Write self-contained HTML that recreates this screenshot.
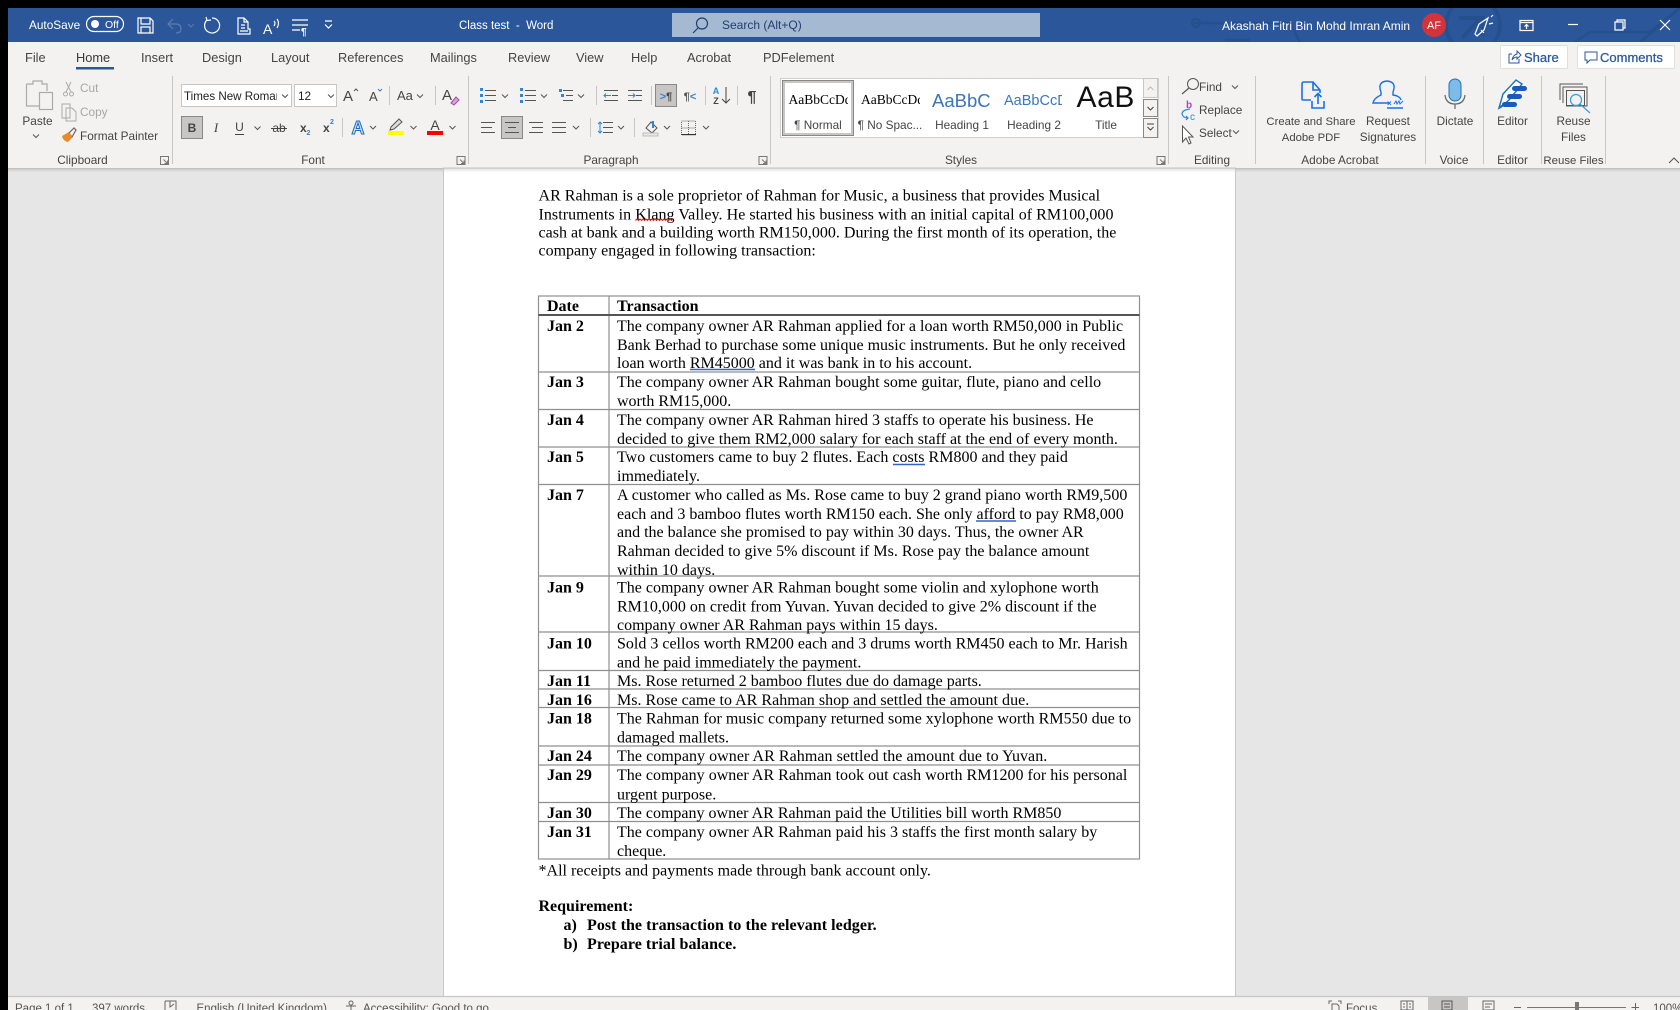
<!DOCTYPE html>
<html><head><meta charset="utf-8"><title>Class test - Word</title>
<style>
html,body{margin:0;padding:0;background:#000;width:1680px;height:1010px;overflow:hidden}
svg{display:block;position:absolute;left:0;top:0}
text{white-space:pre}
.d{font:16px "Liberation Serif",serif;fill:#000}
.b{font:bold 16px "Liberation Serif",serif;fill:#000}
.r{font:11.8px "Liberation Sans",sans-serif;fill:#444}
.c{font:11.8px "Liberation Sans",sans-serif;fill:#444;text-anchor:middle}
.t{font:12.8px "Liberation Sans",sans-serif;fill:#444}
.w{font:12px "Liberation Sans",sans-serif;fill:#fff}
.s{font:11.5px "Liberation Sans",sans-serif;fill:#555}
.i{fill:none;stroke:#555;stroke-width:1}
.k{fill:none;stroke:#666;stroke-width:1}
.wi{fill:none;stroke:#fff;stroke-width:1.2}
.sep{stroke:#c8c6c4;stroke-width:1}
</style></head><body>
<svg width="1680" height="1010" viewBox="0 0 1680 1010" xmlns="http://www.w3.org/2000/svg">
<defs>
<g id="chev"><path d="M-3 -1.5L0 1.5L3 -1.5" fill="none" stroke="#555" stroke-width="1"/></g>
<g id="lau"><path d="M-4 -4H4V4H-4Z M-1 -1L3 3M3 0V3H0" fill="none" stroke="#777" stroke-width="1"/></g>
<linearGradient id="sh" x1="0" y1="0" x2="0" y2="1"><stop offset="0" stop-color="#bbb"/><stop offset="1" stop-color="#e6e6e6" stop-opacity="0"/></linearGradient>
<clipPath id="clipN"><rect x="786" y="90" width="62" height="20"/></clipPath>
<clipPath id="clipS"><rect x="858" y="90" width="62" height="20"/></clipPath>
<clipPath id="clipH1"><rect x="930" y="85" width="60" height="30"/></clipPath>
<clipPath id="clipH2"><rect x="1003" y="85" width="59" height="30"/></clipPath>
<clipPath id="clipT"><rect x="1070" y="78" width="63" height="34"/></clipPath>
<clipPath id="clipF"><rect x="183" y="86" width="94" height="20"/></clipPath>
<clipPath id="clipB"><rect x="8" y="8" width="1672" height="34"/></clipPath>
</defs>

<!-- frame -->
<rect x="8" y="8" width="1672" height="1002" fill="#e6e6e6"/>
<rect x="8" y="8" width="1672" height="34" fill="#2b579a"/>
<g clip-path="url(#clipB)" fill="none" stroke="#264f8e" stroke-width="2.5">
<circle cx="1473" cy="25" r="27" stroke-width="4"/>
<path d="M1459 18H1483V36M1481 18L1462 38" stroke-width="4"/>
<path d="M1194 23H1290L1300 42"/><circle cx="1196" cy="23" r="4"/>
<path d="M1575 42L1590 32H1650L1680 8"/>
<path d="M1640 42L1660 26"/>
<path d="M1225 40H1250"/>
</g>

<!-- title bar -->
<text class="w" x="29" y="29" style="font-size:11.8px">AutoSave</text>
<rect x="86.500" y="16.500" width="37" height="15" rx="7.500" fill="none" stroke="#fff" stroke-width="1.200"/>
<circle cx="95" cy="24" r="4" fill="#fff"/>
<text x="105" y="28" style="font:10.5px 'Liberation Sans',sans-serif;fill:#fff">Off</text>
<path class="wi" d="M138 18H150L153 21V33H138ZM141 18V24H150V18M141 33V27H150V33"/>
<path d="M173 19L168 24L173 29M168 24H176Q181 24 181 29Q181 33 176 33" fill="none" stroke="#5b7db0" stroke-width="1.200"/>
<path d="M188 24L191 27L194 24" fill="none" stroke="#5b7db0" stroke-width="1"/>
<path class="wi" d="M212 18A7.500 7.500 0 1 1 207 20M206 17L207 20.500L211 20"/>
<path class="wi" d="M238 18H244L248 22V29H250V34H238V18ZM244 18V22H248M241 25H245M241 28H245M240 31H248"/>
<text x="263" y="34" style="font:14px 'Liberation Sans',sans-serif;fill:#fff">A</text>
<path class="wi" d="M274 21Q276 23 274 26M277 19Q280 23 277 28" stroke-width="1"/>
<path class="wi" d="M292 20H308M292 25H308M292 30H300"/>
<text x="301" y="35" style="font:bold 10px 'Liberation Sans',sans-serif;fill:#fff">¶</text>
<path class="wi" d="M325 21H332M325 24.500L328.500 28L332 24.500"/>
<text class="w" x="459" y="29" style="font-size:11.5px">Class test  -  Word</text>
<rect x="672" y="13" width="368" height="24" fill="#a6b9d2"/>
<circle cx="702" cy="23.500" r="5.500" fill="none" stroke="#1f3f70" stroke-width="1.200"/><path d="M698 28L693 33" fill="none" stroke="#1f3f70" stroke-width="1.200"/>
<text x="722" y="29" style="font:12px 'Liberation Sans',sans-serif;fill:#1f3f70">Search (Alt+Q)</text>
<text class="w" x="1222" y="30" font-size="12">Akashah Fitri Bin Mohd Imran Amin</text>
<circle cx="1434" cy="25" r="12" fill="#d1343b"/>
<text x="1434" y="29" text-anchor="middle" style="font:11px 'Liberation Sans',sans-serif;fill:#fff">AF</text>
<path class="wi" d="M1475 34L1479 24L1488 18L1484 30L1477 36ZM1481 30L1484 33M1491 17L1493 15M1489 24L1493 23"/>
<rect x="1520" y="20.500" width="13" height="10" fill="none" stroke="#fff" stroke-width="1.200"/><path class="wi" d="M1520 22.500H1533M1526.500 29V25M1524.500 26.500L1526.500 24.500L1528.500 26.500"/>
<path class="wi" d="M1568 24.500H1578"/>
<path class="wi" d="M1615 22H1623V30H1615ZM1617 22V20H1625V28H1623"/>
<path class="wi" d="M1660 20L1670 30M1670 20L1660 30"/>

<!-- ribbon -->
<rect x="8" y="42" width="1672" height="126" fill="#f3f2f1"/>
<rect x="8" y="168" width="1672" height="5" fill="url(#sh)"/>
<text class="t" x="25" y="62">File</text>
<text class="t" x="76" y="62" style="fill:#3b3a39">Home</text>
<rect x="76" y="67" width="38" height="2.500" fill="#2b579a"/>
<text class="t" x="141" y="62">Insert</text>
<text class="t" x="202" y="62">Design</text>
<text class="t" x="271" y="62">Layout</text>
<text class="t" x="338" y="62">References</text>
<text class="t" x="430" y="62">Mailings</text>
<text class="t" x="508" y="62">Review</text>
<text class="t" x="576" y="62">View</text>
<text class="t" x="631" y="62">Help</text>
<text class="t" x="687" y="62">Acrobat</text>
<text class="t" x="763" y="62">PDFelement</text>

<rect x="1500.500" y="45.500" width="67" height="23" rx="1" fill="#fff" stroke="#e1dfdd"/>
<path d="M1509 54H1512M1509 54V63H1519V59M1512 60Q1513 55 1517 54V51L1521 55L1517 59V57Q1514 57 1512 60" fill="none" stroke="#2b579a" stroke-width="1"/>
<text x="1524" y="62" style="font:13px 'Liberation Sans',sans-serif;fill:#2b579a;stroke:#2b579a;stroke-width:.25">Share</text>
<rect x="1577.500" y="45.500" width="97" height="23" rx="1" fill="#fff" stroke="#e1dfdd"/>
<path d="M1585 52H1597V60H1590L1587 63V60H1585Z" fill="none" stroke="#2b579a" stroke-width="1"/>
<text x="1600" y="62" style="font:13px 'Liberation Sans',sans-serif;fill:#2b579a;stroke:#2b579a;stroke-width:.25">Comments</text>

<!-- separators -->
<path class="sep" d="M172.500 76V164M468.500 76V164M770.500 76V164M1168.500 76V164M1255.500 76V164M1425.500 76V164M1483.500 76V164M1541.500 76V164M1605.500 76V164"/>
<path class="sep" d="M389.500 86V105M435.500 86V105M342.500 118V137M596.500 86V105M651.500 86V105M705.500 86V105M737.500 86V105M590.500 118V137M634.500 118V137"/>
<text class="c" x="82.500" y="164">Clipboard</text>
<text class="c" x="313" y="164">Font</text>
<text class="c" x="611" y="164">Paragraph</text>
<text class="c" x="961" y="164">Styles</text>
<text class="c" x="1212" y="164">Editing</text>
<text class="c" x="1340" y="164">Adobe Acrobat</text>
<text class="c" x="1454" y="164">Voice</text>
<text class="c" x="1512.500" y="164">Editor</text>
<text class="c" x="1573.500" y="164" style="font-size:11.4px">Reuse Files</text>
<use href="#lau" x="164.500" y="160.500"/><use href="#lau" x="461" y="160.500"/><use href="#lau" x="763" y="160.500"/><use href="#lau" x="1161" y="160.500"/>
<path d="M1669 163L1674 158L1679 163" fill="none" stroke="#555" stroke-width="1"/>

<!-- clipboard -->
<path d="M26.500 84H33V81H42V84H47V91M26.500 84V106H39" fill="none" stroke="#aaa" stroke-width="1.200"/>
<rect x="39.500" y="92.500" width="13" height="17" fill="#f3f2f1" stroke="#aaa" stroke-width="1.200"/>
<text class="c" x="37.500" y="125">Paste</text>
<use href="#chev" x="36" y="136"/>
<path d="M66 82L71 92M71 82L66 92" fill="none" stroke="#aaa" stroke-width="1"/><circle cx="65.500" cy="94" r="2" fill="none" stroke="#aaa"/><circle cx="71.500" cy="94" r="2" fill="none" stroke="#aaa"/>
<text class="r" x="80" y="92" style="fill:#a6a6a6">Cut</text>
<path d="M62 104H70V118H62ZM66 108H72L76 112V121H66Z" fill="#f3f2f1" stroke="#aaa" stroke-width="1"/>
<text class="r" x="80" y="116" style="fill:#a6a6a6">Copy</text>
<path d="M62 136L69 132L73 137L68 142Q63 141 62 136Z" fill="#e8892b"/>
<path d="M69 133L74 128L76 130L72 137" fill="none" stroke="#666" stroke-width="1.200"/>
<text class="r" x="80" y="140">Format Painter</text>

<!-- font -->
<rect x="181.500" y="84.500" width="110" height="22" fill="#fff" stroke="#c8c6c4"/>
<text x="184" y="100" clip-path="url(#clipF)" style="font:11.6px 'Liberation Sans',sans-serif;fill:#222">Times New Roman</text>
<use href="#chev" x="285" y="96"/>
<rect x="294.500" y="84.500" width="42" height="22" fill="#fff" stroke="#c8c6c4"/>
<text class="r" x="298" y="100" style="fill:#222">12</text>
<use href="#chev" x="331" y="96"/>
<text x="343" y="101" style="font:15px 'Liberation Sans',sans-serif;fill:#444">A</text><path d="M354 91L356 89L358 91" fill="none" stroke="#555"/>
<text x="369" y="101" style="font:13px 'Liberation Sans',sans-serif;fill:#444">A</text><path d="M378 89L380 91L382 89" fill="none" stroke="#3a7fc4"/>
<text x="397" y="100" style="font:13px 'Liberation Sans',sans-serif;fill:#444">Aa</text><use href="#chev" x="420" y="96"/>
<text x="442" y="100" style="font:15px 'Liberation Sans',sans-serif;fill:#444">A</text>
<path d="M451 103L456 97L459 100L454 105Z" fill="#d8a4dd" stroke="#a349a4" stroke-width="1"/>
<rect x="181.500" y="116.500" width="21" height="22" fill="#c8c6c4" stroke="#8a8886"/>
<text x="192" y="132" text-anchor="middle" style="font:bold 12px 'Liberation Sans',sans-serif;fill:#444">B</text>
<text x="216" y="132" text-anchor="middle" style="font:italic 13px 'Liberation Serif',serif;fill:#444">I</text>
<text x="239.500" y="131" text-anchor="middle" style="font:12px 'Liberation Sans',sans-serif;fill:#444">U</text><path d="M235 134.500H244" stroke="#444"/>
<use href="#chev" x="257.500" y="128"/>
<text x="279" y="132" text-anchor="middle" style="font:12px 'Liberation Sans',sans-serif;fill:#444">ab</text><path d="M271 128.500H287" stroke="#444"/>
<text x="300" y="132" style="font:bold 12px 'Liberation Sans',sans-serif;fill:#444">x</text><text x="306.500" y="135" style="font:bold 7px 'Liberation Sans',sans-serif;fill:#3a7fc4">2</text>
<text x="323" y="132" style="font:bold 12px 'Liberation Sans',sans-serif;fill:#444">x</text><text x="330" y="124" style="font:bold 7px 'Liberation Sans',sans-serif;fill:#3a7fc4">2</text>
<text x="358" y="134" text-anchor="middle" style="font:bold 18px 'Liberation Sans',sans-serif;fill:#bfe0f7;stroke:#1e6fbf;stroke-width:1">A</text>
<use href="#chev" x="373" y="127.500"/>
<path d="M391 127L399 119L402 122L394 129L390 130Z" fill="#ddd" stroke="#555" stroke-width="1"/>
<rect x="388" y="131" width="16" height="4" fill="#ffff00"/>
<use href="#chev" x="413.500" y="127.500"/>
<text x="435" y="130" text-anchor="middle" style="font:14px 'Liberation Sans',sans-serif;fill:#444">A</text>
<rect x="427" y="131" width="16" height="4" fill="#ff0000"/>
<use href="#chev" x="452.500" y="127.500"/>

<!-- paragraph -->
<rect x="501.500" y="116.500" width="21" height="22" fill="#c8c6c4" stroke="#8a8886"/>
<g fill="none" stroke="#555">
<path d="M485 90.500H496M485 95.500H496M485 100.500H496"/>
<path d="M525 90.500H536M525 95.500H536M525 100.500H536"/>
<path d="M563 90.500H573M566 95.500H573M563 100.500H573"/>
<path d="M604 90.500H618M612 95.500H618M604 100.500H618"/>
<path d="M628 90.500H642M636 95.500H642M628 100.500H642"/>
<path d="M481 122.500H495M481 127.500H492M481 132.500H495"/>
<path d="M505 122.500H519M508 127.500H516M505 132.500H519"/>
<path d="M529 122.500H543M532 127.500H543M529 132.500H543"/>
<path d="M552 122.500H566M552 127.500H566M552 132.500H566"/>
<path d="M603 122.500H613M603 127.500H613M603 132.500H613"/>
</g>
<g fill="#2e86d6">
<rect x="480" y="88" width="3" height="3"/><rect x="480" y="94" width="3" height="3"/><rect x="480" y="100" width="3" height="3"/>
<rect x="520" y="88" width="3" height="3"/><rect x="520" y="94" width="3" height="3"/><rect x="520" y="100" width="3" height="3"/>
<rect x="559" y="89" width="3" height="3"/><rect x="561" y="94" width="3" height="3"/>
</g>
<use href="#chev" x="505" y="96"/><use href="#chev" x="544" y="96"/><use href="#chev" x="581" y="96"/>
<path d="M628 95.500H635M633 93.500L635 95.500L633 97.500" fill="none" stroke="#2e86d6"/>
<path d="M604 95.500H611M606 93.500L604 95.500L606 97.500" fill="none" stroke="#2e86d6"/>
<rect x="655.500" y="84.500" width="21" height="22" fill="#c8c6c4" stroke="#8a8886"/>
<text x="666" y="100" text-anchor="middle" style="font:bold 11px 'Liberation Sans',sans-serif;fill:#444"><tspan fill="#2e86d6">&gt;</tspan>¶</text>
<text x="690" y="100" text-anchor="middle" style="font:bold 11px 'Liberation Sans',sans-serif;fill:#555">¶<tspan fill="#2e86d6">&lt;</tspan></text>
<text x="716" y="94" text-anchor="middle" style="font:bold 9px 'Liberation Sans',sans-serif;fill:#2e86d6">A</text>
<text x="716" y="104" text-anchor="middle" style="font:bold 9px 'Liberation Sans',sans-serif;fill:#444">Z</text>
<path d="M726 87V103M722 99L726 103L730 99" fill="none" stroke="#444"/>
<text x="752" y="102" text-anchor="middle" style="font:bold 16px 'Liberation Sans',sans-serif;fill:#444">¶</text>
<use href="#chev" x="576" y="127.500"/><use href="#chev" x="621" y="127.500"/><use href="#chev" x="667" y="127.500"/><use href="#chev" x="706" y="127.500"/>
<path d="M600 122V133M598 124L600 122L602 124M598 131L600 133L602 131" fill="none" stroke="#2e86d6"/>
<path d="M646 128L651 122L657 128L652 133Z" fill="#f3f2f1" stroke="#555"/><path d="M653 121V128" stroke="#2e86d6" stroke-width="2"/>
<rect x="643" y="133" width="15" height="3" fill="#e8e8e8" stroke="#aaa" stroke-width=".7"/>
<path d="M681.500 121H695.500V135H681.500ZM688.500 121V135M681.500 128H695.500" fill="none" stroke="#666" stroke-dasharray="1 1"/><path d="M681 134.500H696" stroke="#333"/>

<!-- styles gallery -->
<rect x="780.500" y="78.500" width="378" height="59" fill="#fff" stroke="#d2d0ce"/>
<rect x="782.500" y="80.500" width="71" height="55" fill="#fff" stroke="#8a8886"/>
<rect x="784" y="82" width="68" height="52" fill="none" stroke="#c8c6c4" stroke-width="2"/>
<text clip-path="url(#clipN)" x="788.500" y="104" style="font:13.500px 'Liberation Serif',serif;fill:#000">AaBbCcDdEe</text>
<text clip-path="url(#clipS)" x="861" y="104" style="font:13.500px 'Liberation Serif',serif;fill:#000">AaBbCcDdEe</text>
<text clip-path="url(#clipH1)" x="932" y="107" style="font:18.500px 'Liberation Sans',sans-serif;fill:#3a76bd">AaBbCcD</text>
<text clip-path="url(#clipH2)" x="1004" y="105" style="font:14.500px 'Liberation Sans',sans-serif;fill:#3a76bd">AaBbCcDd</text>
<text clip-path="url(#clipT)" x="1076.500" y="107" style="font:30px 'Liberation Sans',sans-serif;fill:#111;letter-spacing:.6px">AaB</text>
<text class="c" x="818" y="129">¶ Normal</text>
<text class="c" x="890" y="129">¶ No Spac...</text>
<text class="c" x="962" y="129">Heading 1</text>
<text class="c" x="1034" y="129">Heading 2</text>
<text class="c" x="1106" y="129">Title</text>
<rect x="1143.500" y="78.500" width="14" height="19" fill="#f3f2f1" stroke="#c8c6c4"/>
<rect x="1143.500" y="99.500" width="14" height="17" fill="#f3f2f1" stroke="#8a8886"/>
<rect x="1143.500" y="118.500" width="14" height="19" fill="#f3f2f1" stroke="#8a8886"/>
<path d="M1147.500 90L1150.500 87L1153.500 90" fill="none" stroke="#bbb"/>
<path d="M1147.500 107L1150.500 110L1153.500 107" fill="none" stroke="#444"/>
<path d="M1147 124H1154M1147.500 127L1150.500 130L1153.500 127" fill="none" stroke="#444"/>

<!-- editing -->
<circle cx="1193" cy="84" r="5.500" fill="none" stroke="#555"/><path d="M1189 88L1182 94" stroke="#555" stroke-width="1.200"/>
<text class="r" x="1199" y="91">Find</text><use href="#chev" x="1235" y="87"/>
<path d="M1190 109Q1182 110 1182 114Q1183 118 1188 118M1186 116L1188 118L1186 120" fill="none" stroke="#2e86d6" stroke-width="1.200"/>
<text x="1186" y="108" style="font:bold 10px 'Liberation Sans',sans-serif;fill:#b146c2">b</text>
<text x="1190" y="120" style="font:10px 'Liberation Sans',sans-serif;fill:#2e86d6">c</text>
<text class="r" x="1199" y="114">Replace</text>
<path d="M1182.500 126V142L1186 138L1189 144L1191 143L1188.500 137H1193Z" fill="#fff" stroke="#555"/>
<text class="r" x="1199" y="137">Select</text><use href="#chev" x="1236" y="132"/>

<!-- acrobat -->
<path d="M1311 100H1303Q1302 100 1302 99V84Q1302 82 1304 82H1313L1320 90V93M1313 82V90H1320" fill="none" stroke="#1473e6" stroke-width="1.600"/>
<path d="M1312 101V108H1324V101M1318 104V94M1314.500 97L1318 93.500L1321.500 97" fill="none" stroke="#1473e6" stroke-width="1.600"/>
<text class="c" x="1311" y="125" style="font-size:11.3px">Create and Share</text><text class="c" x="1311" y="141" style="font-size:11.3px">Adobe PDF</text>
<path d="M1381 92Q1377 82 1387 81Q1397 82 1393 92V95Q1400 96 1401 100M1381 92V95Q1374 98 1373 103H1390" fill="none" stroke="#1473e6" stroke-width="1.400"/>
<path d="M1387 108H1403" stroke="#1473e6" stroke-width="1.500"/>
<text x="1387" y="106" style="font:bold 8px 'Liberation Sans',sans-serif;fill:#1473e6">×</text>
<path d="M1394 104L1396 101L1397 104L1399 101L1400 104L1403 101" fill="none" stroke="#1473e6" stroke-width="1"/>
<text class="c" x="1388" y="125">Request</text><text class="c" x="1388" y="141">Signatures</text>

<!-- dictate -->
<rect x="1449" y="79" width="12" height="22" rx="6" fill="#7fbbe8" stroke="#1e6fbf" stroke-width="1"/>
<path d="M1445 95Q1446 104 1455 104Q1464 104 1465 95M1455 104V109" fill="none" stroke="#666" stroke-width="1.200"/>
<text class="c" x="1455" y="125">Dictate</text>

<!-- editor -->
<path d="M1499 108L1503 94L1516 80L1522 84L1509 100Z" fill="#fff" stroke="#1e6fbf" stroke-width="1.400"/>
<path d="M1499 108L1505 104" stroke="#1e6fbf" stroke-width="2"/>
<rect x="1512" y="86" width="15" height="5" rx="2.500" fill="#185abd"/>
<rect x="1507" y="94" width="15" height="5" rx="2.500" fill="#185abd"/>
<rect x="1502" y="102" width="15" height="5" rx="2.500" fill="#185abd"/>
<text class="c" x="1512.500" y="125">Editor</text>

<!-- reuse -->
<path d="M1560 100V84H1583M1563 103V87H1587V106H1566" fill="none" stroke="#555" stroke-width="1"/>
<rect x="1566.500" y="90.500" width="18" height="15" fill="none" stroke="#555"/>
<circle cx="1576" cy="100" r="5.500" fill="#f3f2f1" stroke="#3a9bdc" stroke-width="1.200"/>
<path d="M1580 104L1590 113" stroke="#3a9bdc" stroke-width="1.200"/>
<text class="c" x="1573.500" y="125">Reuse</text><text class="c" x="1573.500" y="141">Files</text>

<!-- page -->
<rect x="443.500" y="168" width="792" height="830" fill="#fff" stroke="#c6c6c6"/>
<rect x="8" y="168" width="1672" height="5" fill="url(#sh)" opacity=".6"/>

<!-- intro -->
<text class="d" x="538.500" y="200.500" style="letter-spacing:.015px">AR Rahman is a sole proprietor of Rahman for Music, a business that provides Musical</text>
<text class="d" x="538.500" y="219.500" style="letter-spacing:.05px">Instruments in Klang Valley. He started his business with an initial capital of RM100,000</text>
<text class="d" x="538.500" y="237.500" style="letter-spacing:.012px">cash at bank and a building worth RM150,000. During the first month of its operation, the</text>
<text class="d" x="538.500" y="255.500">company engaged in following transaction:</text>
<path d="M635.500 220.500l1.500 -1.500l1.500 1.500l1.500 -1.500l1.500 1.500l1.500 -1.500l1.500 1.500l1.500 -1.500l1.500 1.500l1.500 -1.500l1.500 1.500l1.500 -1.500l1.500 1.500l1.500 -1.500l1.500 1.500l1.500 -1.500l1.500 1.500l1.500 -1.500l1.500 1.500l1.500 -1.500l1.500 1.500l1.500 -1.500l1.500 1.500l1.500 -1.500l1.500 1.500l1.500 -1.500" fill="none" stroke="#e02020" stroke-width="1"/>

<!-- table -->
<g stroke="#8f8f8f" stroke-width="1.200" fill="none">
<rect x="538.500" y="296" width="601" height="563"/>
<path d="M609 296V859"/>
<path d="M538.500 372H1139.500M538.500 409.500H1139.500M538.500 447H1139.500M538.500 484.500H1139.500M538.500 576H1139.500M538.500 632H1139.500M538.500 670.500H1139.500M538.500 689H1139.500M538.500 707.500H1139.500M538.500 746H1139.500M538.500 765H1139.500M538.500 802.500H1139.500M538.500 821.500H1139.500"/>
<path d="M538.500 315H1139.500" stroke="#555" stroke-width="2"/>
</g>
<path d="M690 369.500H755M893 464.500H925M976 521H1016" stroke="#3264d0" stroke-width="1.600"/>
<g transform="translate(0,-0.7)">
<text class="b" x="547" y="311.500">Date</text>
<text class="b" x="617" y="311.500">Transaction</text>
<text class="b" x="547" y="331.500">Jan 2</text>
<text class="d" x="617" y="331.500">The company owner AR Rahman applied for a loan worth RM50,000 in Public</text>
<text class="d" x="617" y="350.500">Bank Berhad to purchase some unique music instruments. But he only received</text>
<text class="d" x="617" y="368.500">loan worth RM45000 and it was bank in to his account.</text>
<text class="b" x="547" y="387.800">Jan 3</text>
<text class="d" x="617" y="387.800">The company owner AR Rahman bought some guitar, flute, piano and cello</text>
<text class="d" x="617" y="406.500">worth RM15,000.</text>
<text class="b" x="547" y="425.500">Jan 4</text>
<text class="d" x="617" y="425.500">The company owner AR Rahman hired 3 staffs to operate his business. He</text>
<text class="d" x="617" y="444.500">decided to give them RM2,000 salary for each staff at the end of every month.</text>
<text class="b" x="547" y="462.500">Jan 5</text>
<text class="d" x="617" y="462.500" style="letter-spacing:.015px">Two customers came to buy 2 flutes. Each costs RM800 and they paid</text>
<text class="d" x="617" y="481.500">immediately.</text>
<text class="b" x="547" y="500.500">Jan 7</text>
<text class="d" x="617" y="500.500" style="letter-spacing:.015px">A customer who called as Ms. Rose came to buy 2 grand piano worth RM9,500</text>
<text class="d" x="617" y="519.500">each and 3 bamboo flutes worth RM150 each. She only afford to pay RM8,000</text>
<text class="d" x="617" y="537.800">and the balance she promised to pay within 30 days. Thus, the owner AR</text>
<text class="d" x="617" y="556.500">Rahman decided to give 5% discount if Ms. Rose pay the balance amount</text>
<text class="d" x="617" y="575.500">within 10 days.</text>
<text class="b" x="547" y="593.200">Jan 9</text>
<text class="d" x="617" y="593.200">The company owner AR Rahman bought some violin and xylophone worth</text>
<text class="d" x="617" y="612.200">RM10,000 on credit from Yuvan. Yuvan decided to give 2% discount if the</text>
<text class="d" x="617" y="630.500">company owner AR Rahman pays within 15 days.</text>
<text class="b" x="547" y="649.200">Jan 10</text>
<text class="d" x="617" y="649.200">Sold 3 cellos worth RM200 each and 3 drums worth RM450 each to Mr. Harish</text>
<text class="d" x="617" y="668.200">and he paid immediately the payment.</text>
<text class="b" x="547" y="686.500">Jan 11</text>
<text class="d" x="617" y="686.500">Ms. Rose returned 2 bamboo flutes due do damage parts.</text>
<text class="b" x="547" y="705.500">Jan 16</text>
<text class="d" x="617" y="705.500" style="letter-spacing:.02px">Ms. Rose came to AR Rahman shop and settled the amount due.</text>
<text class="b" x="547" y="724.200">Jan 18</text>
<text class="d" x="617" y="724.200">The Rahman for music company returned some xylophone worth RM550 due to</text>
<text class="d" x="617" y="743.200">damaged mallets.</text>
<text class="b" x="547" y="761.800">Jan 24</text>
<text class="d" x="617" y="761.800" style="letter-spacing:.05px">The company owner AR Rahman settled the amount due to Yuvan.</text>
<text class="b" x="547" y="780.800">Jan 29</text>
<text class="d" x="617" y="780.800" style="letter-spacing:.015px">The company owner AR Rahman took out cash worth RM1200 for his personal</text>
<text class="d" x="617" y="800.200">urgent purpose.</text>
<text class="b" x="547" y="818.500">Jan 30</text>
<text class="d" x="617" y="818.500">The company owner AR Rahman paid the Utilities bill worth RM850</text>
<text class="b" x="547" y="837.500">Jan 31</text>
<text class="d" x="617" y="837.500" style="letter-spacing:.015px">The company owner AR Rahman paid his 3 staffs the first month salary by</text>
<text class="d" x="617" y="856.800">cheque.</text>
</g>
<text class="d" x="538.500" y="875.500" style="letter-spacing:.02px">*All receipts and payments made through bank account only.</text>
<text class="b" x="538.500" y="911.200">Requirement:</text>
<text class="b" x="563.500" y="930.200">a)</text><text class="b" x="587" y="930.200" style="letter-spacing:.05px">Post the transaction to the relevant ledger.</text>
<text class="b" x="563.500" y="948.800">b)</text><text class="b" x="587" y="948.800" style="letter-spacing:.05px">Prepare trial balance.</text>

<!-- status bar -->
<rect x="8" y="996" width="1672" height="14" fill="#f3f2f1"/>
<path d="M8 996.500H1680" stroke="#c6c6c6" stroke-width="1.200"/>
<text class="s" x="15" y="1012">Page 1 of 1</text>
<text class="s" x="92" y="1012">397 words</text>
<path d="M165 1001H176V1010M165 1001V1010M170 1001V1007L174 1004" fill="none" stroke="#666"/>
<text class="s" x="196.500" y="1012">English (United Kingdom)</text>
<circle cx="351" cy="1003" r="2" fill="none" stroke="#666"/>
<path d="M346 1006H356M351 1005V1010" fill="none" stroke="#666"/>
<text class="s" x="363" y="1012">Accessibility: Good to go</text>
<path d="M1329 1004V1001H1332M1338 1001H1341V1004M1332 1010V1004H1337L1339 1006V1010" fill="none" stroke="#666"/>
<text class="s" x="1346" y="1012">Focus</text>
<path d="M1401 1001H1413V1010H1401ZM1407 1001V1010M1403 1004H1405M1403 1007H1405M1409 1004H1411M1409 1007H1411" fill="none" stroke="#666"/>
<rect x="1428" y="997" width="40" height="13" fill="#c8c6c4"/>
<path d="M1442 1001H1452V1010H1442ZM1444 1004H1450M1444 1007H1450" fill="none" stroke="#555"/>
<path d="M1483 1001H1494V1010H1483ZM1485 1004H1492M1485 1007H1490" fill="none" stroke="#666"/>
<path d="M1514 1007.500H1521" stroke="#666"/>
<path d="M1527 1007.500H1626" stroke="#777"/>
<rect x="1575" y="1002" width="4" height="8" fill="#777"/>
<path d="M1631.500 1007.500H1639M1635.500 1003V1010" stroke="#666"/>
<text class="s" x="1653" y="1012">100%</text>
</svg>
</body></html>
